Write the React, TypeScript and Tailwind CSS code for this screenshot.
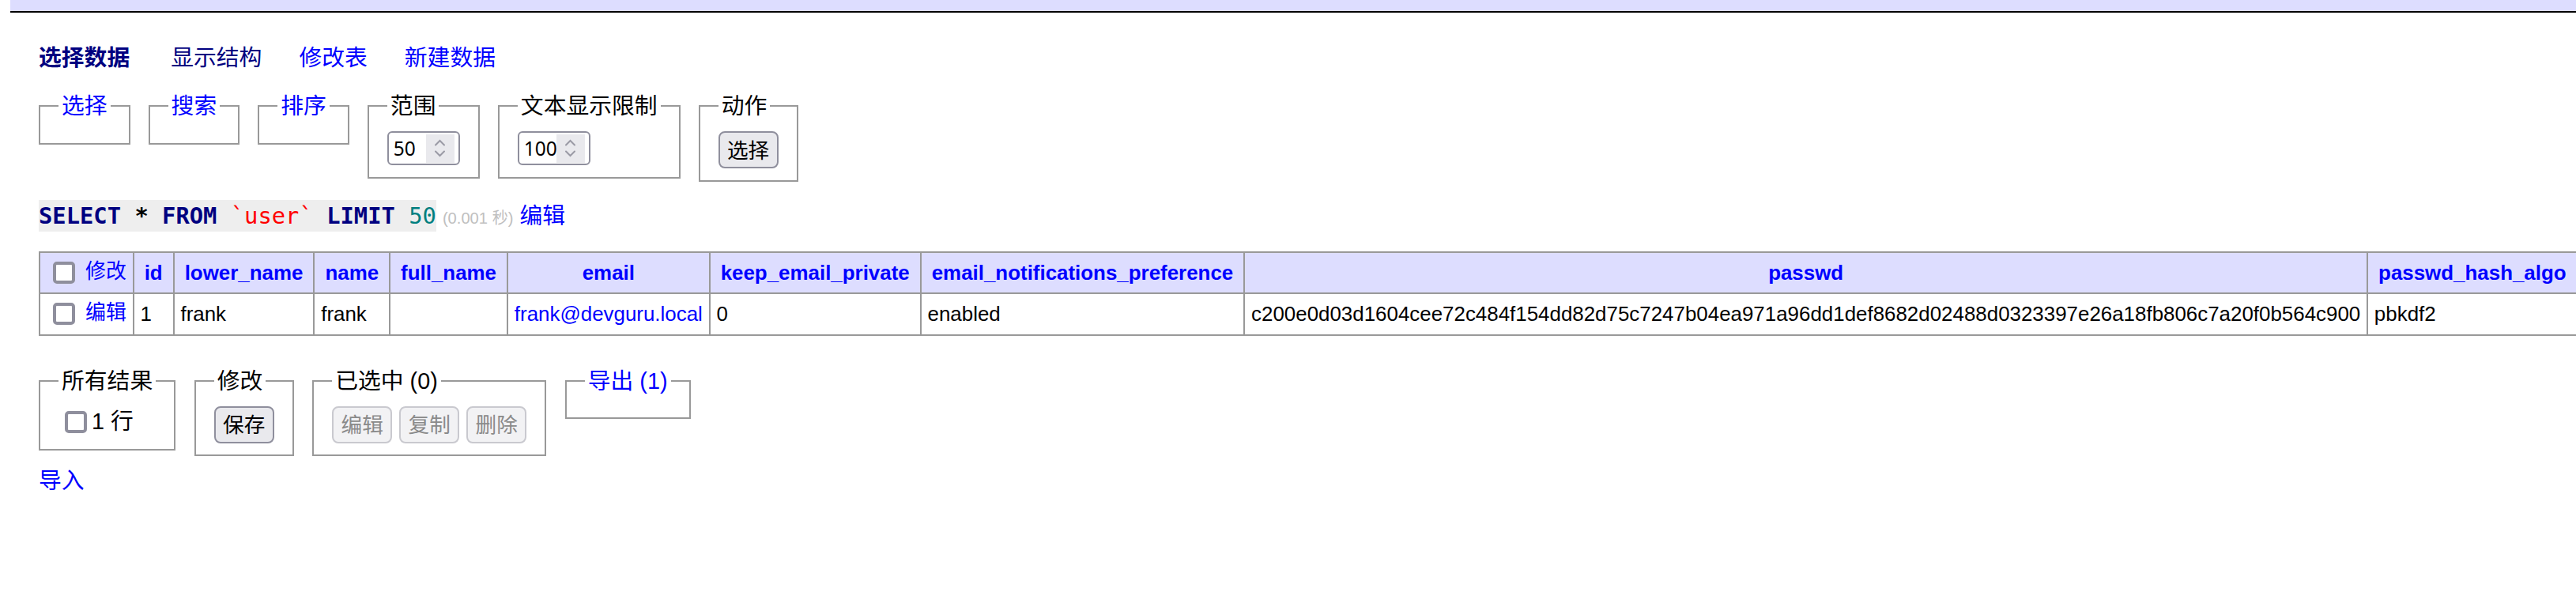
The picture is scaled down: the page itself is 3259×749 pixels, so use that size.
import type { ReactNode } from 'react';

const sans = "font-['Liberation_Sans','Noto_Sans_CJK_SC',sans-serif]";
const control = "font-['Noto_Sans','Noto_Sans_CJK_SC',sans-serif]";

function Checkbox() {
  return (
    <span className="inline-block align-middle w-[28px] h-[28px] my-[6px] ml-[8px] mr-[6px] border-[4px] border-[#8f8f9d] rounded-[5px] bg-white" />
  );
}

function Fieldset({ legend, link, children }: { legend: string; link?: boolean; children?: ReactNode }) {
  return (
    <fieldset className="border-2 border-[#999] px-[23px] pt-[14.4px] pb-[14.4px] m-0 min-w-0">
      <legend className="px-[4px] leading-[36px]">
        {link ? <a className="text-[#0000ff]">{legend}</a> : legend}
      </legend>
      {children}
    </fieldset>
  );
}

function Chevron({ up }: { up?: boolean }) {
  return (
    <svg width="15" height="9" viewBox="0 0 15 9" fill="none" stroke="#9a9aa5" strokeWidth="2" strokeLinecap="round">
      {up ? <polyline points="2,7.5 7.5,2 13,7.5" /> : <polyline points="2,1.5 7.5,7 13,1.5" />}
    </svg>
  );
}

function NumberBox({ value }: { value: string }) {
  return (
    <span className="flex items-center w-[92px] h-[43px] border-2 border-[#8f8f9d] rounded-[6px] bg-white pl-[6px] pr-[5px]">
      <span className={`flex-1 overflow-x-hidden whitespace-nowrap ${control} text-[24.5px] leading-[1.3]`}>{value}</span>
      <span className="w-[36px] h-[36px] bg-[#e9e9ed] flex flex-col items-center justify-center gap-[5px]">
        <Chevron up />
        <Chevron />
      </span>
    </span>
  );
}

function Btn({ children, disabled }: { children: ReactNode; disabled?: boolean }) {
  return (
    <button
      className={`${control} w-[76px] h-[47px] rounded-[8px] border-2 text-[26.67px] leading-none ${
        disabled ? 'border-[#c9c9cf] bg-[#f2f2f4] text-[#8a8a8a]' : 'border-[#8f8f9d] bg-[#e9e9ed] text-black'
      }`}
    >
      {children}
    </button>
  );
}

const columns = [
  'id', 'lower_name', 'name', 'full_name', 'email', 'keep_email_private',
  'email_notifications_preference', 'passwd', 'passwd_hash_algo',
];

const row: { value: string; link?: boolean }[] = [
  { value: '1' },
  { value: 'frank' },
  { value: 'frank' },
  { value: '' },
  { value: 'frank@devguru.local', link: true },
  { value: '0' },
  { value: 'enabled' },
  { value: 'c200e0d03d1604cee72c484f154dd82d75c7247b04ea971a96dd1def8682d02488d0323397e26a18fb806c7a20f0b564c900' },
  { value: 'pbkdf2' },
];

export default function App() {
  return (
    <div className={`min-h-screen bg-white text-black overflow-hidden ${sans} text-[28.8px] leading-[1.25]`}>
      <div className="ml-[13px] h-[16px] bg-[#ddf] border-b-2 border-black" />

      <div className="ml-[49px]">
        <p className="mt-[40px] flex">
          <a className="font-bold text-[#000080] mr-[52px]">选择数据</a>
          <a className="text-[#000080] mr-[47px]">显示结构</a>
          <a className="text-[#0000ff] mr-[47px]">修改表</a>
          <a className="text-[#0000ff]">新建数据</a>
        </p>

        <form className="mt-[24px] flex items-start gap-[23px]">
          <Fieldset legend="选择" link />
          <Fieldset legend="搜索" link />
          <Fieldset legend="排序" link />
          <Fieldset legend="范围">
            <NumberBox value="50" />
          </Fieldset>
          <Fieldset legend="文本显示限制">
            <NumberBox value="100" />
          </Fieldset>
          <Fieldset legend="动作">
            <Btn>选择</Btn>
          </Fieldset>
        </form>

        <p className="mt-[23px] whitespace-nowrap">
          <code className="inline-block h-[40px] leading-[40px] bg-[#eee] font-['DejaVu_Sans_Mono',monospace] text-[28.8px] whitespace-pre">
            <b className="text-[#000080]">SELECT</b> <b>*</b> <b className="text-[#000080]">FROM</b>{' '}
            <span className="text-[#ff0000]">`user`</span> <b className="text-[#000080]">LIMIT</b>{' '}
            <span className="text-[#007f7f]">50</span>
          </code>{' '}
          <span className="text-[20.16px] text-[#c0c0c0]">(0.001 秒)</span> <a className="text-[#0000ff]">编辑</a>
        </p>

        <table className="mt-[25px] border-collapse text-[25.92px] leading-[1.25] whitespace-nowrap">
          <thead>
            <tr className="bg-[#ddf]">
              <td className="border-2 border-[#999] px-[7.8px] py-[5.2px]">
                <Checkbox /> <a className="text-[#0000ff]">修改</a>
              </td>
              {columns.map((c) => (
                <th key={c} className="border-2 border-[#999] px-[13px] py-[5.2px] text-center font-bold">
                  <a className="text-[#0000ff]">{c}</a>
                </th>
              ))}
            </tr>
          </thead>
          <tbody>
            <tr>
              <td className="border-2 border-[#999] px-[7.8px] py-[5.2px]">
                <Checkbox /> <a className="text-[#0000ff]">编辑</a>
              </td>
              {row.map((cell, i) => (
                <td key={i} className="border-2 border-[#999] px-[7.8px] py-[5.2px]">
                  {cell.link ? <a className="text-[#0000ff]">{cell.value}</a> : cell.value}
                </td>
              ))}
            </tr>
          </tbody>
        </table>

        <div className="mt-[39px] flex items-start gap-[23.5px]">
          <Fieldset legend="所有结果">
            <label className="flex items-center">
              <Checkbox />1 行
            </label>
          </Fieldset>
          <Fieldset legend="修改">
            <Btn>保存</Btn>
          </Fieldset>
          <Fieldset legend="已选中 (0)">
            <div className="flex gap-[9px]">
              <Btn disabled>编辑</Btn>
              <Btn disabled>复制</Btn>
              <Btn disabled>删除</Btn>
            </div>
          </Fieldset>
          <Fieldset legend="导出 (1)" link />
        </div>

        <p className="mt-[14px]">
          <a className="text-[#0000ff]">导入</a>
        </p>
      </div>
    </div>
  );
}
